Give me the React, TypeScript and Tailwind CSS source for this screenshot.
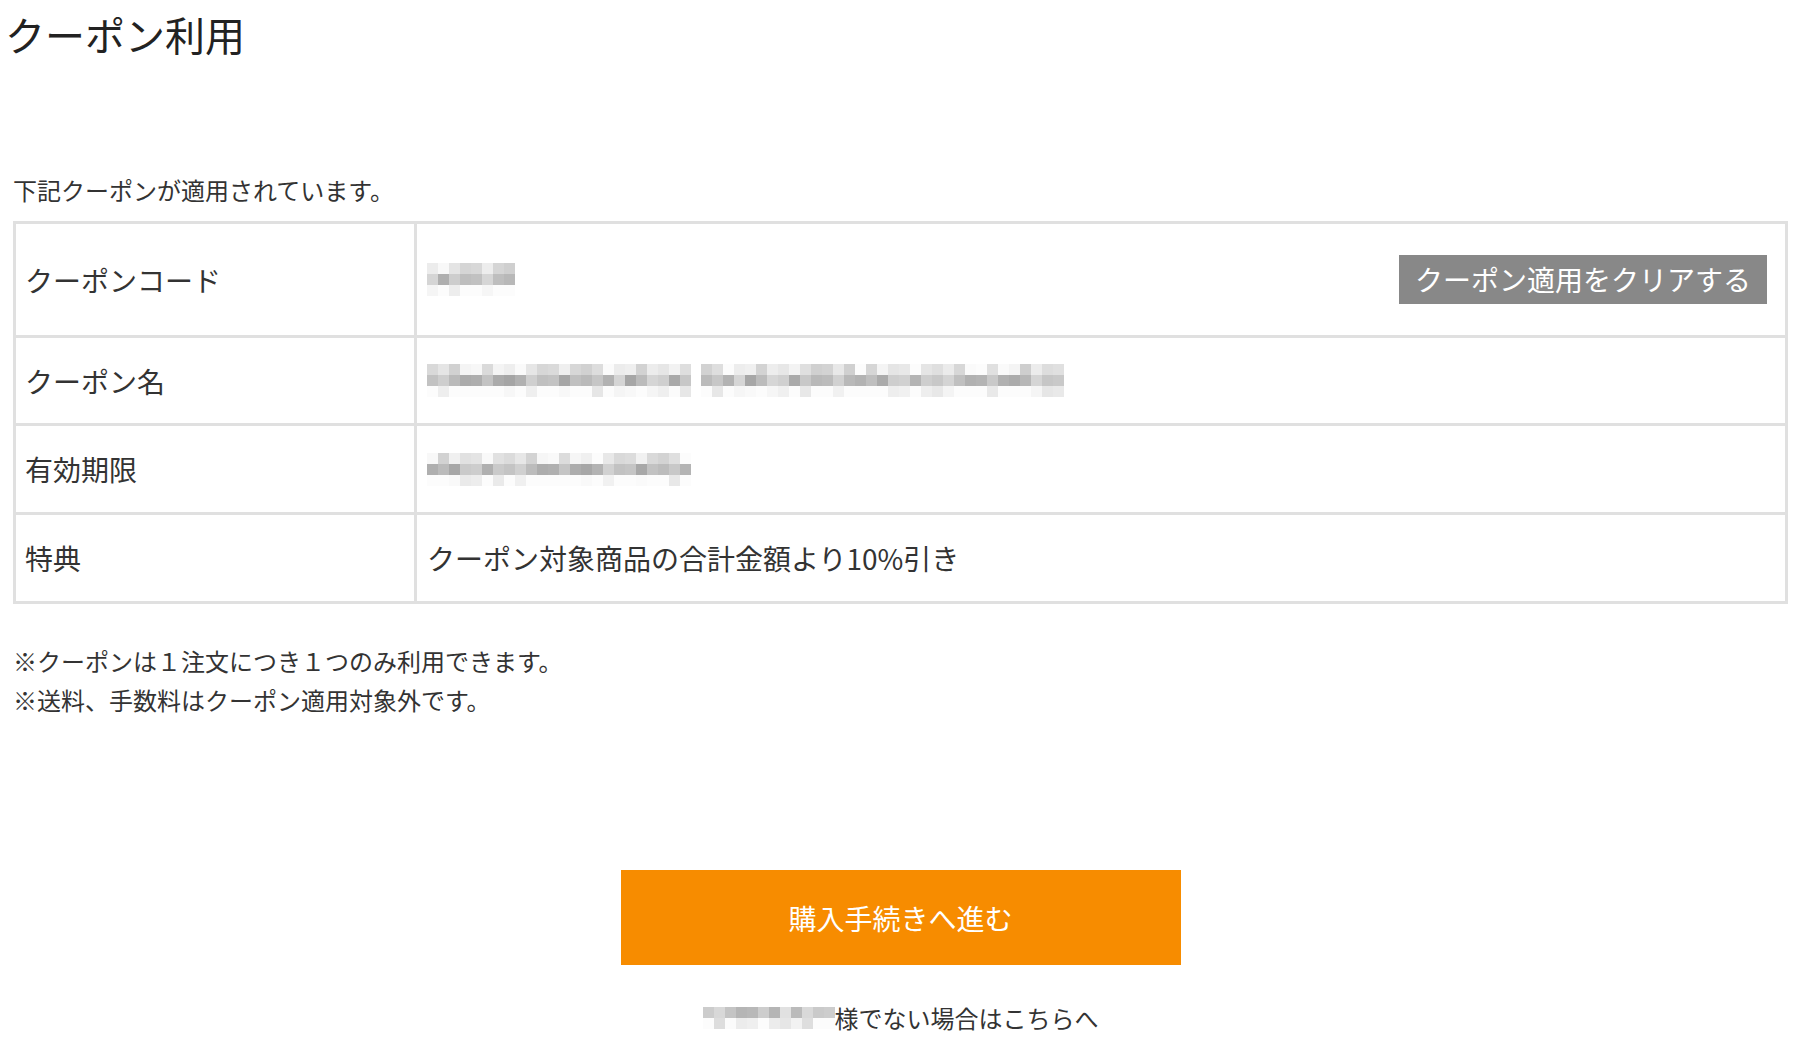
import type { ReactNode } from 'react'

const FONT = "font-['Noto_Sans_CJK_JP','Noto_Sans',sans-serif]"

function Blur({ cols, seed, rows = 3 }: { cols: number; seed: number; rows?: number }) {
  return (
    <div className="flex flex-col">
      {Array.from({ length: rows }, (_, r) => (
        <div key={r} className="flex">
          {Array.from({ length: cols }, (_, c) => {
            const n = (c * 53 + r * 17 + seed * 31 + ((c * c) % 7) * 9) % 50
            const base = rows === 2 ? (r === 0 ? 180 : 218) : r === 0 ? 205 : r === 1 ? 165 : 230
            const v = Math.min(252, base + n)
            return (
              <div
                key={c}
                className="h-[11px] w-[11px]"
                style={{ backgroundColor: `rgb(${v},${v},${v})` }}
              />
            )
          })}
        </div>
      ))}
    </div>
  )
}

function Row({
  label,
  height,
  first,
  children,
}: {
  label: string
  height: string
  first?: boolean
  children: ReactNode
}) {
  return (
    <div className={`flex ${height} ${first ? '' : 'border-t-[3px] border-[#e0e0e0]'}`}>
      <div className="flex w-[401px] shrink-0 items-center border-r-[3px] border-[#e0e0e0] pl-[9px] text-[28px] text-[#333]">
        {label}
      </div>
      <div className="flex flex-1 items-center pl-[10px] pr-[18px] text-[28px] text-[#333]">
        {children}
      </div>
    </div>
  )
}

export default function App() {
  return (
    <div className={`min-h-[1052px] bg-white ${FONT}`}>
      <div className="pl-[13px] pr-[22px]">
        <h1 className="-ml-[8px] pt-[14px] text-[40px] leading-[40px] font-normal text-[#222]">
          クーポン利用
        </h1>

        <p className="mt-[121px] text-[24px] leading-[30px] text-[#333]">
          下記クーポンが適用されています。
        </p>

        <div className="mt-[16px] border-[3px] border-[#e0e0e0]">
          <Row label="クーポンコード" height="h-[111px]" first>
            <div className="flex w-full items-center justify-between">
              <Blur cols={8} seed={1} />
              <button
                type="button"
                className="h-[49px] w-[368px] bg-[#888888] text-[28px] leading-[49px] text-white"
              >
                クーポン適用をクリアする
              </button>
            </div>
          </Row>
          <Row label="クーポン名" height="h-[88px]">
            <div className="flex gap-[10px]">
              <Blur cols={24} seed={2} />
              <Blur cols={33} seed={5} />
            </div>
          </Row>
          <Row label="有効期限" height="h-[89px]">
            <Blur cols={24} seed={3} />
          </Row>
          <Row label="特典" height="h-[89px]">
            クーポン対象商品の合計金額より10%引き
          </Row>
        </div>

        <div className="mt-[37px] text-[24px] leading-[39px] text-[#333]">
          <p>※クーポンは１注文につき１つのみ利用できます。</p>
          <p>※送料、手数料はクーポン適用対象外です。</p>
        </div>

        <button
          type="button"
          className="mx-auto mt-[151px] block h-[95px] w-[560px] bg-[#f78c00] text-[28px] text-white"
        >
          購入手続きへ進む
        </button>

        <div className="mt-[38px] flex items-center justify-center text-[24px] leading-[30px] text-[#333]">
          <Blur cols={12} seed={4} rows={2} />
          <span>様でない場合はこちらへ</span>
        </div>
      </div>
    </div>
  )
}
